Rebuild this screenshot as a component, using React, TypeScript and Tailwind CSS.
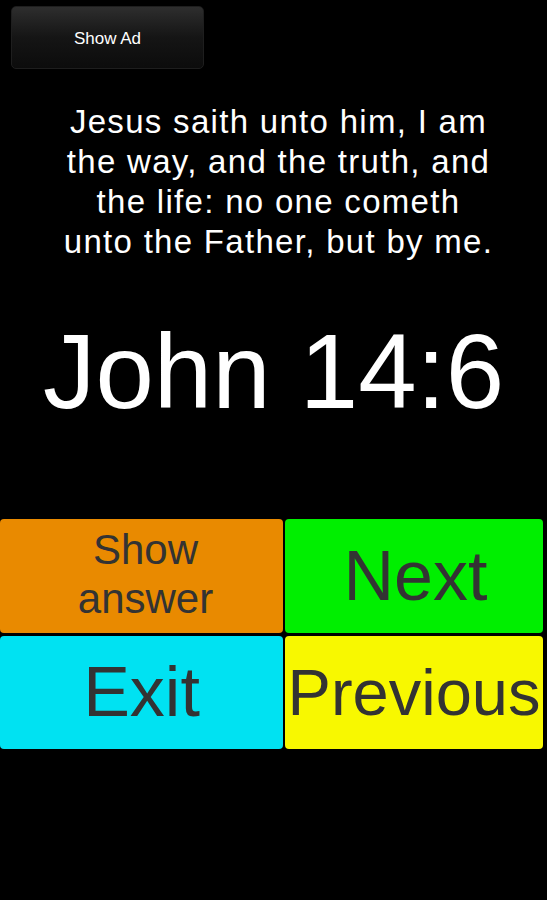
import React from 'react';

const font = { fontFamily: '"Liberation Sans", Arial, sans-serif' };

export default function App() {
    return (
        <div className="w-[547px] h-[900px] bg-black flex flex-col" style={font}>
            <div className="pt-[6px] pl-[11px]">
                <button className="w-[193px] h-[63px] pt-[3px] rounded-[5px] bg-gradient-to-b from-[#2e2e2e] via-[#151515] to-[#0c0c0c] border border-[#1e1e1e] text-white text-[17px] flex items-center justify-center">
                    Show Ad
                </button>
            </div>

            <div className="mt-[33px] pl-[10px] text-center text-white text-[33px] leading-[40px] tracking-[1.3px]">
                Jesus saith unto him, I am<br />
                the way, and the truth, and<br />
                the life: no one cometh<br />
                unto the Father, but by me.
            </div>

            <div className="mt-[50px] text-center text-white text-[105px] leading-[120px]">
                John 14:6
            </div>

            <div className="mt-[87px] grid grid-cols-[283px_258px] gap-x-[2px] gap-y-[3px] text-[#333333]">
                <button className="h-[114px] pb-[4px] pl-[8px] rounded-[4px] bg-[#e98a00] text-[42px] leading-[49px] flex flex-col items-center justify-center">
                    <span>Show</span>
                    <span>answer</span>
                </button>
                <button className="h-[114px] pl-[3px] rounded-[4px] bg-[#00ef00] text-[70px] flex items-center justify-center">
                    Next
                </button>
                <button className="h-[113px] rounded-[4px] bg-[#00e2f2] text-[70px] flex items-center justify-center">
                    Exit
                </button>
                <button className="h-[113px] rounded-[4px] bg-[#f8f800] text-[65px] flex items-center justify-center whitespace-nowrap">
                    Previous
                </button>
            </div>
        </div>
    );
}
